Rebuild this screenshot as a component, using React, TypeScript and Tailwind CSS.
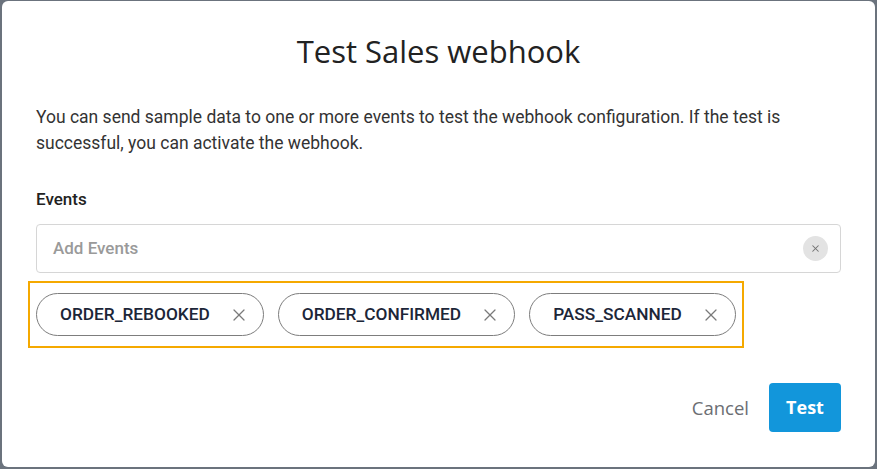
import { X } from 'lucide-react'

const events = ['ORDER_REBOOKED', 'ORDER_CONFIRMED', 'PASS_SCANNED']

function Chip({ label }: { label: string }) {
  return (
    <div className="flex items-center h-[43px] pl-[23px] pr-[14px] gap-[19px] rounded-full border border-[#7d7d7d] bg-white">
      <span className="text-[17.3px] font-medium text-[#1c2638]">{label}</span>
      <X className="w-[20px] h-[20px] text-[#7a7a7a]" strokeWidth={1.5} />
    </div>
  )
}

export default function App() {
  return (
    <div className="w-full h-[469px] bg-[#6b737d] pt-px pl-[2px] pr-[2px] pb-[2px]" style={{ fontFamily: 'Roboto, sans-serif' }}>
      <div className="h-full bg-white rounded-[6px] flex flex-col px-[34px]">
        <h1
          className="text-center text-[31px] text-[#222] pt-[30px] leading-[40px]"
          style={{ fontFamily: '"Open Sans", sans-serif' }}
        >
          Test Sales webhook
        </h1>

        <p className="mt-[33px] text-[17.5px] leading-[26px] text-[#333]">
          You can send sample data to one or more events to test the webhook configuration. If the test is successful, you can activate the webhook.
        </p>

        <label className="mt-[31px] text-[17px] font-medium text-[#222] leading-[24px]">Events</label>

        <div className="mt-[13px] h-[49px] border border-[#d6d6d6] rounded-[4px] flex items-center justify-between pl-[16px] pr-[12px]">
          <span className="text-[17px] font-medium text-[#9a9a9a]">Add Events</span>
          <span className="w-[25px] h-[25px] rounded-full bg-[#e3e3e3] flex items-center justify-center">
            <X className="w-[11px] h-[11px] text-[#707070]" strokeWidth={2.2} />
          </span>
        </div>

        <div className="mt-[8px] -ml-[8px] self-start border-2 border-[#f5a900] px-[6px] py-[10px] flex gap-[14px]">
          {events.map((e) => (
            <Chip key={e} label={e} />
          ))}
        </div>

        <div className="mt-[35px] flex items-center justify-end gap-[19px]" style={{ fontFamily: '"Open Sans", sans-serif' }}>
          <button className="text-[18.5px] text-[#6b6e73] px-[1px]">Cancel</button>
          <button className="w-[72px] h-[49px] rounded-[4px] bg-[#1296db] text-white text-[18px] font-bold">
            Test
          </button>
        </div>
      </div>
    </div>
  )
}
